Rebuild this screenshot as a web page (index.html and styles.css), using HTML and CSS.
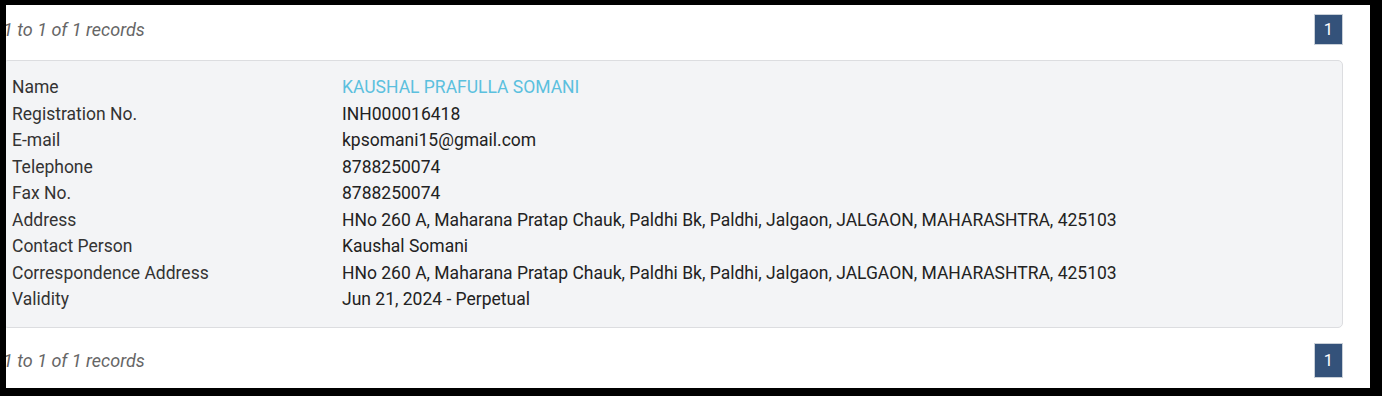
FILE: index.html
```html
<!DOCTYPE html>
<html>
<head>
    <link rel="stylesheet" href="styles.css">
</head>
<body>
    <div class="frame">
        <div class="inner">
            <div class="pager pager-top">
                <span class="records">1 to 1 of 1 records</span>
                <span class="page page-top">1</span>
            </div>
            <div class="card">
                <div class="row"><span class="label">Name</span><span class="value name">KAUSHAL PRAFULLA SOMANI</span></div>
                <div class="row"><span class="label">Registration No.</span><span class="value">INH000016418</span></div>
                <div class="row"><span class="label">E-mail</span><span class="value">kpsomani15@gmail.com</span></div>
                <div class="row"><span class="label">Telephone</span><span class="value">8788250074</span></div>
                <div class="row"><span class="label">Fax No.</span><span class="value">8788250074</span></div>
                <div class="row"><span class="label">Address</span><span class="value">HNo 260 A, Maharana Pratap Chauk, Paldhi Bk, Paldhi, Jalgaon, JALGAON, MAHARASHTRA, 425103</span></div>
                <div class="row"><span class="label">Contact Person</span><span class="value">Kaushal Somani</span></div>
                <div class="row"><span class="label">Correspondence Address</span><span class="value">HNo 260 A, Maharana Pratap Chauk, Paldhi Bk, Paldhi, Jalgaon, JALGAON, MAHARASHTRA, 425103</span></div>
                <div class="row"><span class="label">Validity</span><span class="value">Jun 21, 2024 - Perpetual</span></div>
            </div>
            <div class="pager pager-bottom">
                <span class="records">1 to 1 of 1 records</span>
                <span class="page page-bottom">1</span>
            </div>
        </div>
    </div>
</body>
</html>
```

FILE: styles.css
```css
html, body { margin: 0; padding: 0; }
body { background-color: #000; font-family: Roboto, "Liberation Sans", sans-serif; }
.frame {
    background-color: #fff;
    margin: 5px 12px 0 6px;
    height: 383px;
    overflow: hidden;
}
.inner { margin-left: -3px; margin-right: 27px; }
.pager { display: flex; justify-content: space-between; align-items: center; }
.pager-top { padding-top: 9px; height: 31px; }
.pager-bottom { padding-top: 15px; height: 35px; }
.records { color: #666; font-style: italic; font-size: 18px; }
.page {
    display: flex; align-items: center; justify-content: center;
    width: 27px; background-color: #34527a; color: #fff;
    border: 1px solid #c9d0d8; font-size: 16.5px;
}
.page-top { height: 29px; }
.page-bottom { height: 33px; }
.card {
    margin-top: 15px;
    background-color: #f3f4f6;
    border: 1px solid #dcdde0;
    border-radius: 5px;
    padding: 13px 8px 14px 8px;
}
.row { display: flex; font-size: 17.5px; line-height: 26.5px; }
.label { width: 330px; flex-shrink: 0; color: #333; }
.value { color: #222; }
.name { color: #5bc0de; }
```
